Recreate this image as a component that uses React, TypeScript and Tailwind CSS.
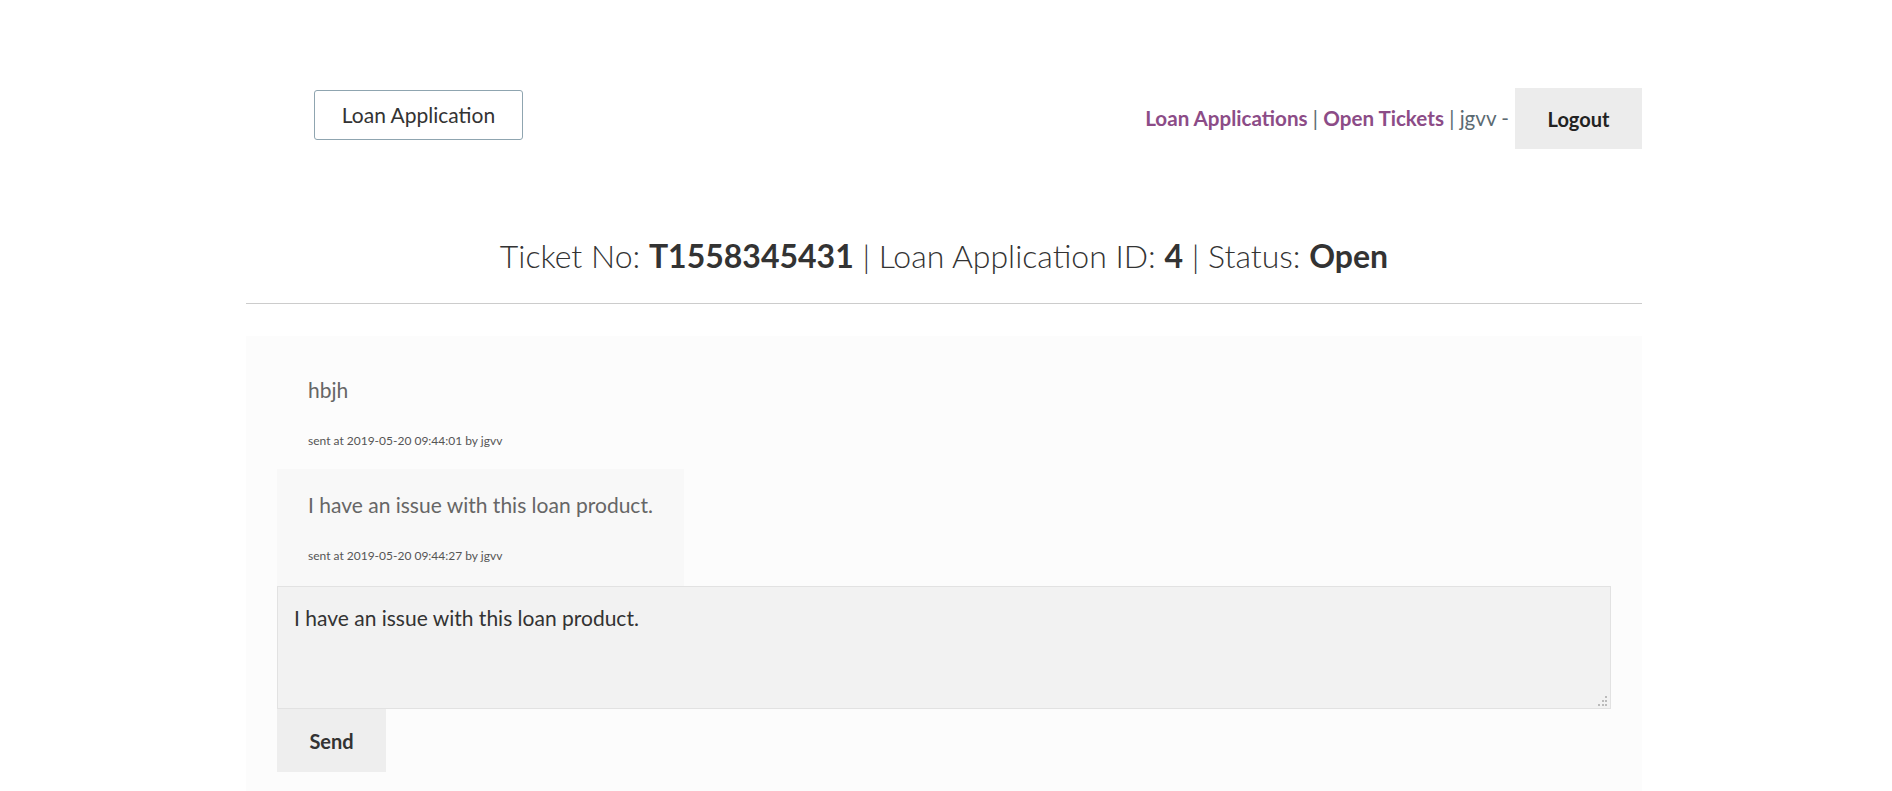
const font = "font-['Lato','Open_Sans',sans-serif]";

type Message = {
  body: string;
  sentAt: string;
  by: string;
  highlight?: boolean;
};

const messages: Message[] = [
  { body: "hbjh", sentAt: "2019-05-20 09:44:01", by: "jgvv" },
  { body: "I have an issue with this loan product.", sentAt: "2019-05-20 09:44:27", by: "jgvv", highlight: true },
];

function Header() {
  return (
    <div className="flex items-start justify-between pt-[88px]">
      <button className="ml-[68px] mt-[2px] h-[50px] w-[209px] rounded-[3px] border border-[#8fa5b0] bg-white text-[21px] text-[#333]">
        Loan Application
      </button>
      <div className="flex items-center">
        <div className="text-[20.6px] text-[#5b6a72]">
          <a className="font-bold text-[#8c4c87]">Loan Applications</a>
          <span> | </span>
          <a className="font-bold text-[#8c4c87]">Open Tickets</a>
          <span> | jgvv - </span>
        </div>
        <button className="ml-[6px] h-[61px] w-[127px] bg-[#ececec] text-[20px] font-bold text-[#222]">Logout</button>
      </div>
    </div>
  );
}

function MessageBubble({ m, first }: { m: Message; first: boolean }) {
  return (
    <div
      className={
        (m.highlight ? "bg-[#f8f8f8] " : "") +
        (first ? "pt-[20px] pb-[20px] " : "pt-[23px] pb-[22px] ") +
        "self-start px-[31px]"
      }
    >
      <div className="text-[21px] leading-[26px] text-[#666]">{m.body}</div>
      <div className="mt-[30px] text-[12px] leading-[16px] text-[#555]">
        sent at {m.sentAt} by {m.by}
      </div>
    </div>
  );
}

function Grip() {
  return (
    <svg className="absolute right-[3px] bottom-[3px]" width="10" height="10" viewBox="0 0 10 10">
      <rect x="7" y="0" width="2" height="2" fill="#bbb" />
      <rect x="4" y="4" width="2" height="2" fill="#bbb" />
      <rect x="7" y="4" width="2" height="2" fill="#bbb" />
      <rect x="0" y="8" width="2" height="2" fill="#bbb" />
      <rect x="4" y="8" width="2" height="2" fill="#bbb" />
      <rect x="7" y="8" width="2" height="2" fill="#bbb" />
    </svg>
  );
}

export default function App() {
  return (
    <div className={`${font} min-h-[791px] bg-white`}>
      <div className="ml-[246px] w-[1396px]">
        <Header />
        <div className="mt-[87px] border-b border-[#cccccc] pb-[27px] text-center text-[32px] font-light leading-[40px] text-[#333]">
          Ticket No: <b className="font-bold">T1558345431</b> | Loan Application ID: <b className="font-bold">4</b> | Status:{" "}
          <b className="font-bold">Open</b>
        </div>
        <div className="mt-[32px] flex min-h-[455px] flex-col bg-[#fcfcfc] px-[31px] pt-[21px] pb-[19px]">
          {messages.map((m, i) => (
            <MessageBubble key={i} m={m} first={i === 0} />
          ))}
          <div className="relative">
            <textarea
              className="block h-[123px] w-full resize-none border border-[#e2e2e2] bg-[#f2f2f2] px-[16px] pt-[18px] text-[21px] leading-[26px] text-[#333] outline-none"
              defaultValue="I have an issue with this loan product."
            />
            <Grip />
          </div>
          <button className="h-[63px] w-[109px] bg-[#eeeeee] text-[20px] font-bold text-[#333]">Send</button>
        </div>
      </div>
    </div>
  );
}
